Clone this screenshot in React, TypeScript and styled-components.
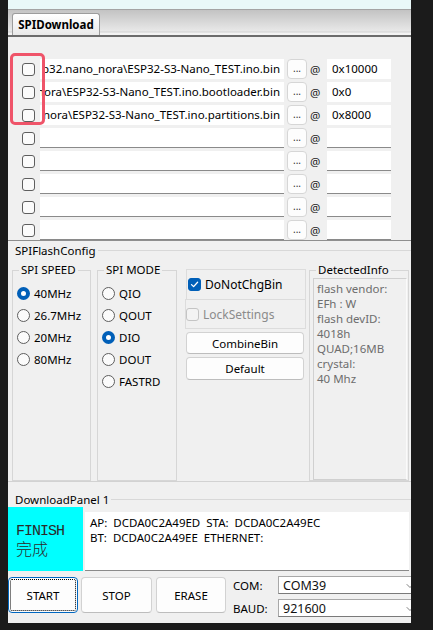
import React from 'react';
import styled, { createGlobalStyle, css } from 'styled-components';
import { ChevronDown } from 'lucide-react';

const Global = createGlobalStyle`
  html, body { margin: 0; padding: 0; background: #1b1b1b; }
  body { font-family: "Noto Sans", "Open Sans", sans-serif; font-size: 11.5px; color: #000; }
  * { box-sizing: border-box; }
`;

const Desktop = styled.div`
  width: 433px;
  height: 630px;
  padding-left: 8px;
  background: #1b1b1b;
  overflow: hidden;
`;

const Window = styled.div`
  width: 403px;
  height: 623px;
  background: #f0f0f0;
  display: flex;
  flex-direction: column;
  overflow: hidden;
`;

const TitleStrip = styled.div`
  height: 10px;
  flex: none;
  background: #e9f8f8;
  border-bottom: 1px solid #a4a4a4;
`;

const TabBar = styled.div`
  height: 27px;
  flex: none;
  display: flex;
  align-items: flex-end;
  padding-left: 4px;
  border-bottom: 2px solid #6c6c6c;
  background: linear-gradient(to bottom, #c3c3c3 0px, #e8e8e8 21px, #d2d2d2 22px, #f3f3f3 23px, #f3f3f3 25px);
`;

const Tab = styled.div`
  width: 88px;
  height: 22px;
  border: 1px solid #9c9c9c;
  border-bottom: none;
  border-radius: 3px 3px 0 0;
  background: linear-gradient(to bottom, #ffffff, #e9e9e9);
  font-weight: 700;
  font-size: 11.5px;
  display: flex;
  align-items: center;
  justify-content: center;
  padding-bottom: 1px;
`;

/* ---------- file list ---------- */
const FilePanel = styled.div`
  position: relative;
  height: 204px;
  flex: none;
  padding-top: 22px;
  border-bottom: 1px solid #8e8e8e;
  display: flex;
  flex-direction: column;
  gap: 3px;
`;

const Highlight = styled.div`
  position: absolute;
  left: 2px;
  top: 16px;
  width: 35px;
  height: 72px;
  border: 3px solid #ef5469;
  border-radius: 5px;
  pointer-events: none;
`;

const FileRow = styled.div`
  height: 20px;
  display: flex;
  align-items: center;
  padding-left: 14px;
`;

const CheckBox = styled.span<{ $checked?: boolean; $disabled?: boolean }>`
  width: 13px;
  height: 13px;
  flex: none;
  border-radius: 3px;
  display: inline-flex;
  align-items: center;
  justify-content: center;
  ${p =>
    p.$checked
      ? css`background: #005fb8; border: 1px solid #005fb8;`
      : css`background: ${p.$disabled ? '#f3f3f3' : '#fbfbfb'}; border: 1px solid ${p.$disabled ? '#c4c4c4' : '#5e5e5e'};`}
`;

const PathBox = styled.div<{ $empty?: boolean }>`
  width: 244px;
  height: 20px;
  margin-left: 5px;
  background: #fff;
  border-bottom: 1px solid ${p => (p.$empty ? '#8a8a8a' : '#ffffff')};
  display: flex;
  align-items: center;
  justify-content: flex-end;
  overflow: hidden;
  white-space: nowrap;
  padding-right: 4px;
  font-size: 11.5px;
`;

const DotsButton = styled.div`
  width: 20px;
  height: 20px;
  margin-left: 3px;
  background: #fdfdfd;
  border: 1px solid #d6d6d6;
  border-radius: 4px;
  font-size: 10px;
  color: #333;
  display: flex;
  align-items: center;
  justify-content: center;
  padding-bottom: 2px;
`;

const At = styled.span`
  width: 20px;
  padding-left: 3px;
  font-size: 11.5px;
  color: #222;
`;

const AddrBox = styled.div<{ $empty?: boolean }>`
  width: 64px;
  height: 20px;
  background: #fff;
  border-bottom: 1px solid ${p => (p.$empty ? '#8a8a8a' : '#ffffff')};
  display: flex;
  align-items: center;
  padding-left: 5px;
  font-size: 11.5px;
`;

/* ---------- flash config ---------- */
const ConfigSection = styled.div`
  flex: none;
  height: 241px;
  border-bottom: 1px solid #d2d2d2;
  display: flex;
  flex-direction: column;
`;

const SectionHeader = styled.div<{ $h: number }>`
  height: ${p => p.$h}px;
  display: flex;
  align-items: center;
  padding-left: 7px;
  flex: none;
  &::after {
    content: '';
    flex: 1;
    height: 1px;
    margin-left: 2px;
    background: #d8d8d8;
  }
`;

const ColumnsRow = styled.div`
  margin-top: 3px;
  height: 219px;
  display: flex;
  align-items: stretch;
  padding-left: 4px;
`;

const Group = styled.fieldset<{ $w: number; $ml: number; $pl: number }>`
  width: ${p => p.$w}px;
  margin: 0 0 0 ${p => p.$ml}px;
  padding: 0 0 0 ${p => p.$pl}px;
  min-width: 0;
  border: 1px solid #d6d6d6;
  display: flex;
  flex-direction: column;
`;

const GroupTitle = styled.legend<{ $ml: number }>`
  padding: 0 2px;
  margin-left: ${p => p.$ml}px;
  font-size: 11.5px;
  line-height: 16px;
`;

const RadioList = styled.div`
  padding-top: 4px;
  display: flex;
  flex-direction: column;
`;

const RadioRow = styled.div`
  height: 22px;
  display: flex;
  align-items: center;
  gap: 4px;
  font-size: 11.5px;
`;

const RadioDot = styled.span<{ $checked?: boolean }>`
  width: 13px;
  height: 13px;
  flex: none;
  border-radius: 50%;
  background: #fbfbfb;
  ${p => (p.$checked ? css`border: 4px solid #005fb8; background: #fff;` : css`border: 1px solid #5e5e5e;`)}
`;

const OptionsColumn = styled.div`
  width: 120px;
  margin-left: 9px;
  margin-top: 7px;
  display: flex;
  flex-direction: column;
`;

const OptionFrame = styled.div<{ $disabled?: boolean }>`
  height: 30px;
  border: 1px solid #dcdcdc;
  border-bottom: ${p => (p.$disabled ? '1px solid #dcdcdc' : 'none')};
  display: flex;
  align-items: center;
  gap: 4px;
  padding-left: ${p => (p.$disabled ? 0 : 1)}px;
  color: ${p => (p.$disabled ? '#8b8b8b' : '#000')};
  font-size: 12px;
  margin-left: ${p => (p.$disabled ? -1 : 0)}px;
`;

const PushButton = styled.div<{ $h: number; $mt: number; $w?: number; $focus?: boolean }>`
  height: ${p => p.$h}px;
  margin-top: ${p => p.$mt}px;
  ${p => (p.$w ? css`width: ${p.$w}px;` : '')}
  flex: none;
  background: #fdfdfd;
  border: 1px solid ${p => (p.$focus ? '#0067c0' : '#d2d2d2')};
  border-bottom-color: ${p => (p.$focus ? '#0067c0' : '#bdbdbd')};
  border-radius: 4px;
  display: flex;
  align-items: center;
  justify-content: center;
  font-size: 11.5px;
  position: relative;
  ${p =>
    p.$focus &&
    css`
      &::before {
        content: '';
        position: absolute;
        inset: 1px;
        border: 1px dotted #000;
        border-radius: 2px;
      }
    `}
`;

const InfoPanel = styled.div`
  flex: 1;
  margin-right: 1px;
  border: 1px solid #d0d0d0;
  border-right-color: #fafafa;
  padding: 2px 3px;
  color: #6d6d6d;
  font-size: 11.5px;
  line-height: 15px;
`;

/* ---------- download panel ---------- */
const DownloadSection = styled.div`
  flex: none;
  padding-top: 9px;
  display: flex;
  flex-direction: column;
`;

const StatusRow = styled.div`
  display: flex;
  align-items: flex-end;
  height: 64px;
`;

const FinishBox = styled.div`
  width: 75px;
  height: 64px;
  background: #00ffff;
  padding: 17px 0 0 8px;
  font-family: "Liberation Mono", "Noto Sans CJK SC", monospace;
  font-size: 15px;
  line-height: 16px;
  letter-spacing: -1px;
  color: #2a2a2a;
`;

const Cjk = styled.div`
  font-family: "Noto Sans CJK SC", sans-serif;
  font-weight: 300;
  font-size: 16px;
  letter-spacing: 0;
`;

const MacBox = styled.div`
  width: 324px;
  height: 59px;
  margin-left: 2px;
  background: #fff;
  border-bottom: 1px solid #8a8a8a;
  padding: 3px 0 0 5px;
  font-size: 11.5px;
  line-height: 15px;
  white-space: pre;
`;

const ControlRow = styled.div`
  display: flex;
  align-items: flex-start;
  margin-top: 5px;
  height: 42px;
`;

const ButtonSlot = styled.div<{ $ml: number }>`
  margin-left: ${p => p.$ml}px;
  padding-top: 1px;
`;

const PortGrid = styled.div`
  margin-left: 7px;
  display: grid;
  grid-template-columns: 45px 145px;
  row-gap: 5px;
  align-items: center;
`;

const PortLabel = styled.span`
  font-size: 11.5px;
  padding-top: 1px;
`;

const Combo = styled.div`
  height: 18px;
  background: #fff;
  border: 1px solid #a8a8a8;
  border-bottom-color: #7a7a7a;
  display: flex;
  align-items: center;
  justify-content: space-between;
  padding: 1px 6px 0 4px;
  font-size: 12.5px;
  color: #111;
`;

const Check = () => (
  <svg width="9" height="9" viewBox="0 0 9 9">
    <path d="M1.5 4.6 L3.6 6.6 L7.6 2.2" fill="none" stroke="#fff" strokeWidth="1.3" strokeLinecap="round" strokeLinejoin="round" />
  </svg>
);

const files = [
  { path: 'p32.nano_nora\\ESP32-S3-Nano_TEST.ino.bin', addr: '0x10000' },
  { path: 'nora\\ESP32-S3-Nano_TEST.ino.bootloader.bin', addr: '0x0' },
  { path: 'nora\\ESP32-S3-Nano_TEST.ino.partitions.bin', addr: '0x8000' },
  { path: '', addr: '' },
  { path: '', addr: '' },
  { path: '', addr: '' },
  { path: '', addr: '' },
  { path: '', addr: '' },
];

const speeds = [
  { label: '40MHz', on: true },
  { label: '26.7MHz' },
  { label: '20MHz' },
  { label: '80MHz' },
];

const modes = [
  { label: 'QIO' },
  { label: 'QOUT' },
  { label: 'DIO', on: true },
  { label: 'DOUT' },
  { label: 'FASTRD' },
];

const info = ['flash vendor:', 'EFh : W', 'flash devID:', '4018h', 'QUAD;16MB', 'crystal:', '40 Mhz'];

export default function App() {
  return (
    <>
      <Global />
      <Desktop>
        <Window>
          <TitleStrip />
          <TabBar>
            <Tab>SPIDownload</Tab>
          </TabBar>

          <FilePanel>
            {files.map((f, i) => (
              <FileRow key={i}>
                <CheckBox />
                <PathBox $empty={!f.path}>{f.path}</PathBox>
                <DotsButton>...</DotsButton>
                <At>@</At>
                <AddrBox $empty={!f.addr}>{f.addr}</AddrBox>
              </FileRow>
            ))}
            <Highlight />
          </FilePanel>

          <ConfigSection>
            <SectionHeader $h={18}>SPIFlashConfig</SectionHeader>
            <ColumnsRow>
              <Group $w={79} $ml={0} $pl={4}>
                <GroupTitle $ml={2}>SPI SPEED</GroupTitle>
                <RadioList>
                  {speeds.map(s => (
                    <RadioRow key={s.label}>
                      <RadioDot $checked={s.on} />
                      {s.label}
                    </RadioRow>
                  ))}
                </RadioList>
              </Group>
              <Group $w={80} $ml={6} $pl={4}>
                <GroupTitle $ml={2}>SPI MODE</GroupTitle>
                <RadioList>
                  {modes.map(s => (
                    <RadioRow key={s.label}>
                      <RadioDot $checked={s.on} />
                      {s.label}
                    </RadioRow>
                  ))}
                </RadioList>
              </Group>
              <OptionsColumn>
                <OptionFrame>
                  <CheckBox $checked>
                    <Check />
                  </CheckBox>
                  DoNotChgBin
                </OptionFrame>
                <OptionFrame $disabled>
                  <CheckBox $disabled />
                  LockSettings
                </OptionFrame>
                <PushButton $h={22} $mt={3} $w={118}>CombineBin</PushButton>
                <PushButton $h={23} $mt={3} $w={118}>Default</PushButton>
              </OptionsColumn>
              <Group $w={100} $ml={3} $pl={3}>
                <GroupTitle $ml={3}>DetectedInfo</GroupTitle>
                <InfoPanel>
                  {info.map(l => (
                    <div key={l}>{l}</div>
                  ))}
                </InfoPanel>
              </Group>
            </ColumnsRow>
          </ConfigSection>

          <DownloadSection>
            <SectionHeader $h={16}>DownloadPanel 1</SectionHeader>
            <StatusRow>
              <FinishBox>
                <div>FINISH</div>
                <Cjk>完成</Cjk>
              </FinishBox>
              <MacBox>
                {'AP:  DCDA0C2A49ED  STA:  DCDA0C2A49EC\nBT:  DCDA0C2A49EE  ETHERNET:'}
              </MacBox>
            </StatusRow>
            <ControlRow>
              <ButtonSlot $ml={0}>
                <PushButton $h={36} $mt={0} $w={70} $focus>START</PushButton>
              </ButtonSlot>
              <ButtonSlot $ml={3}>
                <PushButton $h={36} $mt={0} $w={71}>STOP</PushButton>
              </ButtonSlot>
              <ButtonSlot $ml={4}>
                <PushButton $h={36} $mt={0} $w={70}>ERASE</PushButton>
              </ButtonSlot>
              <PortGrid>
                <PortLabel>COM:</PortLabel>
                <Combo>
                  COM39
                  <ChevronDown size={12} strokeWidth={1.5} color="#555" />
                </Combo>
                <PortLabel>BAUD:</PortLabel>
                <Combo>
                  921600
                  <ChevronDown size={12} strokeWidth={1.5} color="#555" />
                </Combo>
              </PortGrid>
            </ControlRow>
          </DownloadSection>
        </Window>
      </Desktop>
    </>
  );
}
